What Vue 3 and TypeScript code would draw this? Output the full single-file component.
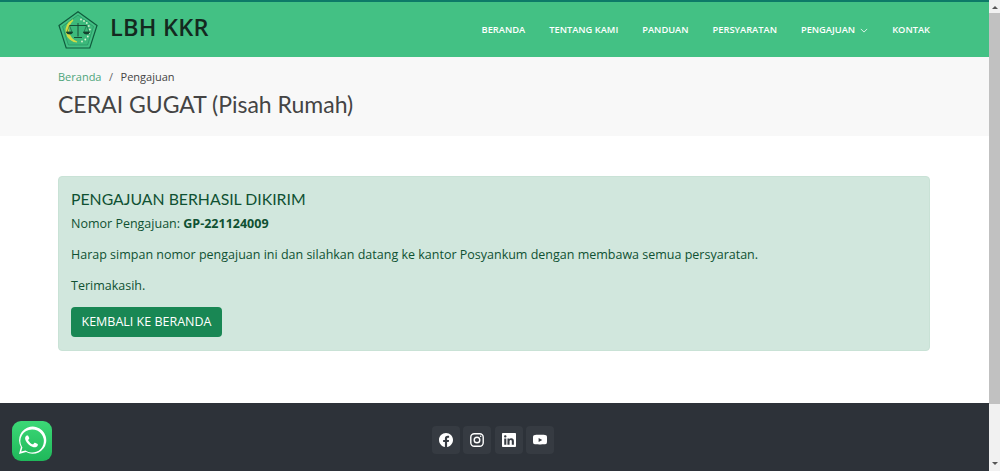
<script setup lang="ts">
const nav: string[] = ['Beranda', 'Tentang Kami', 'Panduan', 'Persyaratan', 'Pengajuan', 'Kontak']
</script>

<template>
  <div class="page">
    <div class="viewport">
      <header class="topbar">
        <div class="brand">
          <svg class="logo" viewBox="0 0 40 38" aria-hidden="true">
            <path d="M20 .8 39 14.500 31.800 37H8.200L1 14.500Z" fill="#43c184" stroke="#0f5a3c" stroke-width="1.200" />
            <path d="M20 4 35.500 15.500 29.600 34H10.400L4.500 15.500Z" fill="#3cb97b" stroke="#1f8a5a" stroke-width=".6" />
            <path d="M15 9A11.500 11.500 0 0 0 19 31 13 13 0 0 1 15 9Z" fill="#cfdc45" stroke="#cfdc45" stroke-width="1.200" />
            <g fill="#d9f2cf">
              <circle cx="23" cy="8.500" r=".9" /><circle cx="26" cy="10" r=".9" /><circle cx="28.800" cy="12" r=".9" />
              <circle cx="30.800" cy="15" r=".9" /><circle cx="31.800" cy="18.500" r=".9" /><circle cx="31.300" cy="22" r=".9" />
              <circle cx="29.800" cy="25.500" r=".9" /><circle cx="27.300" cy="28.500" r=".9" /><circle cx="24" cy="30.500" r=".9" />
            </g>
            <g fill="none" stroke="#14432f" stroke-width=".9">
              <path d="M20 12V25.500M16 26.500h8M11.500 14.500h17" />
              <path d="M11.500 14.500 9 21M11.500 14.500 14 21M28.500 14.500 26 21M28.500 14.500 31 21" stroke-width=".5" />
              <path d="M8.500 21a3 2 0 0 0 6 0ZM25.500 21a3 2 0 0 0 6 0Z" fill="#14432f" />
            </g>
          </svg>
          <span class="brand-name">LBH KKR</span>
        </div>
        <nav class="nav">
          <a v-for="item in nav" :key="item" class="nav-link">
            {{ item }}
            <svg v-if="item === 'Pengajuan'" class="chev" viewBox="0 0 10 6" aria-hidden="true">
              <path d="M1 1l4 4 4-4" fill="none" stroke="currentColor" stroke-width="1" />
            </svg>
          </a>
        </nav>
      </header>

      <section class="crumbs">
        <div class="trail">
          <span class="trail-link">Beranda</span>
          <span class="trail-sep">/</span>
          <span>Pengajuan</span>
        </div>
        <h1 class="title">CERAI GUGAT (Pisah Rumah)</h1>
      </section>

      <main class="content">
        <div class="alert">
          <h2 class="alert-title">PENGAJUAN BERHASIL DIKIRIM</h2>
          <p class="alert-no">Nomor Pengajuan: <b>GP-221124009</b></p>
          <p class="alert-p">Harap simpan nomor pengajuan ini dan silahkan datang ke kantor Posyankum dengan membawa semua persyaratan.</p>
          <p class="alert-p">Terimakasih.</p>
          <a class="btn">KEMBALI KE BERANDA</a>
        </div>
      </main>

      <footer class="footer">
        <a class="social">
          <svg viewBox="0 0 16 16"><path fill="#fff" d="M16 8.050C16 3.600 12.420 0 8 0S0 3.600 0 8.050c0 4.020 2.930 7.350 6.750 7.950v-5.620H4.720V8.050h2.030V6.280c0-2.020 1.190-3.130 3.020-3.130.88 0 1.790.16 1.790.16v1.980h-1.010c-.99 0-1.300.62-1.300 1.250v1.510h2.220l-.35 2.330H9.250V16C13.070 15.400 16 12.070 16 8.050Z" /></svg>
        </a>
        <a class="social">
          <svg viewBox="0 0 16 16" fill="none" stroke="#fff"><rect x=".9" y=".9" width="14.200" height="14.200" rx="4" stroke-width="1.600" /><circle cx="8" cy="8" r="3.200" stroke-width="1.600" /><circle cx="12.200" cy="3.800" r=".9" fill="#fff" stroke="none" /></svg>
        </a>
        <a class="social">
          <svg viewBox="0 0 16 16"><path fill="#fff" d="M0 1.150C0 .51.530 0 1.180 0h13.640C15.470 0 16 .51 16 1.150v13.700c0 .64-.53 1.150-1.180 1.150H1.180C.53 16 0 15.490 0 14.850ZM4.940 13.390V6.170h-2.400v7.220ZM3.740 5.180c.84 0 1.360-.55 1.360-1.250-.02-.71-.52-1.250-1.340-1.250s-1.360.54-1.360 1.250c0 .7.520 1.250 1.330 1.250ZM8.650 13.390V9.360c0-.22.020-.43.080-.59.170-.43.570-.88 1.230-.88.870 0 1.220.66 1.220 1.630v3.870h2.400V9.250c0-2.220-1.190-3.250-2.770-3.250-1.270 0-1.850.7-2.170 1.190V6.170H6.240c.03.68 0 7.220 0 7.220Z" /></svg>
        </a>
        <a class="social">
          <svg viewBox="0 0 16 16"><path fill="#fff" d="M8.050 2c.43 0 4.200.01 5.640.2.990.1 1.600.3 1.950.95.240.44.340 1.100.36 2.050L16 8l-.01 1.800c-.03 1-.13 1.700-.37 2.100-.35.640-.96.840-1.940.94-1.440.15-5.200.16-5.630.16H7.950c-.43 0-4.200-.01-5.640-.16-.99-.1-1.600-.3-1.950-.94-.24-.4-.34-1.100-.36-2.100L0 8l.01-2.800c.02-.95.120-1.610.36-2.050C.72 2.500 1.330 2.300 2.310 2.200 3.750 2.010 7.520 2 7.950 2Z" /><path fill="#363b42" d="M6.400 5.600v4.800L10.600 8Z" /></svg>
        </a>
      </footer>

      <a class="wa" aria-label="WhatsApp">
        <svg viewBox="0 0 40 40">
          <path fill="#fff" d="M7 33l1.900-7a13.600 13.600 0 1 1 5.200 5.100ZM20 8.400a11.600 11.600 0 0 0-9.900 17.600l.3.400-1.200 4.200 4.300-1.100.4.200A11.600 11.600 0 1 0 20 8.400Z" />
          <path fill="#fff" transform="translate(3.200 3.400) scale(.84)" d="M15.600 13.800c-.3-.6-.5-.6-.8-.6h-.7c-.3 0-.7.100-1 .5-.4.400-1.300 1.300-1.300 3.100s1.300 3.600 1.500 3.800c.2.300 2.600 4.100 6.400 5.600 3.100 1.200 3.800 1 4.500.9.700-.1 2.200-.9 2.500-1.800.3-.9.300-1.600.2-1.800-.1-.2-.3-.3-.7-.5l-2.600-1.200c-.4-.1-.6-.2-.9.200l-1.200 1.500c-.2.300-.4.300-.8.100-.4-.2-1.600-.6-3.100-1.900-1.100-1-1.900-2.300-2.100-2.700-.2-.4 0-.6.200-.8l.6-.7.400-.7c.1-.3.100-.5 0-.7Z" />
        </svg>
      </a>
    </div>

    <aside class="scrollbar" aria-hidden="true">
      <span class="arrow up"></span>
      <span class="thumb"></span>
      <span class="arrow down"></span>
    </aside>
  </div>
</template>

<style>
html, body { margin: 0; overflow: hidden; }
</style>

<style scoped>
.page {
  display: flex;
  width: 1000px;
  height: 471px;
  overflow: hidden;
  background: #fff;
  font-family: "Open Sans", "Noto Sans", sans-serif;
  color: #444;
}
.viewport {
  position: relative;
  flex: 1;
  min-width: 0;
  display: flex;
  flex-direction: column;
}
.topbar {
  height: 55px;
  flex: none;
  box-sizing: content-box;
  display: flex;
  align-items: center;
  justify-content: space-between;
  padding: 0 59px 0 58px;
  background: #43c184;
  border-top: 2px solid #0d7a68;
}
.brand { display: flex; align-items: center; gap: 12px; }
.logo { width: 40px; height: 38px; display: block; }
.brand-name {
  font-size: 23.500px;
  font-weight: 600;
  letter-spacing: .25px;
  color: #14291f;
  margin-bottom: 5px;
}
.nav { display: flex; gap: 24px; }
.nav-link {
  display: flex;
  align-items: center;
  gap: 5px;
  font-size: 9.300px;
  font-weight: 600;
  text-transform: uppercase;
  color: #fff;
}
.chev { width: 8px; height: 5px; margin-top: 1px; }
.crumbs {
  height: 79px;
  flex: none;
  box-sizing: border-box;
  padding: 12px 58px 0;
  background: #f8f8f8;
}
.trail { display: flex; font-size: 11px; line-height: 16px; color: #444; }
.trail-link { color: #4fa57b; }
.trail-sep { margin: 0 7.500px; color: #666; }
.title {
  margin: 5px 0 0;
  font-family: Lato, "Open Sans", sans-serif;
  font-size: 23px;
  line-height: 28px;
  font-weight: 400;
  color: #444;
}
.content { flex: 1; padding: 40px 59px 0 58px; }
.alert {
  box-sizing: border-box;
  height: 175px;
  padding: 12px 12px;
  background: #d1e7dd;
  border: 1px solid #c9e2d6;
  border-radius: 4px;
  color: #0f5132;
}
.alert-title {
  margin: 0;
  font-family: Lato, "Open Sans", sans-serif;
  font-size: 15.800px;
  line-height: 20px;
  font-weight: 400;
  color: #0f5132;
}
.alert-no { margin: 5px 0 0; font-size: 12.500px; line-height: 19px; }
.alert-p { margin: 12px 0 0; font-size: 12.500px; line-height: 19px; }
.btn {
  display: inline-block;
  margin-top: 12px;
  padding: 0 10.500px;
  height: 30px;
  line-height: 30px;
  background: #198754;
  border-radius: 4px;
  color: #fff;
  font-size: 12.500px;
}
.footer {
  height: 68px;
  flex: none;
  box-sizing: border-box;
  padding: 23px 3px 0 0;
  display: flex;
  justify-content: center;
  align-items: flex-start;
  gap: 3.400px;
  background: #2d3239;
}
.social {
  width: 28px;
  height: 28px;
  display: flex;
  align-items: center;
  justify-content: center;
  border-radius: 4px;
  background: #363b42;
}
.social svg { width: 14px; height: 14px; display: block; }
.wa {
  position: absolute;
  left: 12px;
  top: 421px;
  width: 40px;
  height: 40px;
  border-radius: 9px;
  background: linear-gradient(#3cd876, #1fb85a);
}
.wa svg { width: 40px; height: 40px; display: block; }
.scrollbar {
  width: 11px;
  flex: none;
  display: flex;
  flex-direction: column;
  background: #f1f1f1;
}
.arrow { height: 14px; flex: none; position: relative; }
.arrow::after {
  content: "";
  position: absolute;
  left: 2.500px;
  border-left: 3px solid transparent;
  border-right: 3px solid transparent;
}
.up::after { top: 6px; border-bottom: 3px solid #555; }
.down::after { bottom: 6px; border-top: 3px solid #555; }
.thumb { height: 391px; flex: none; background: #c1c1c1; margin-top: -1px; }
.down { margin-top: auto; }
</style>
